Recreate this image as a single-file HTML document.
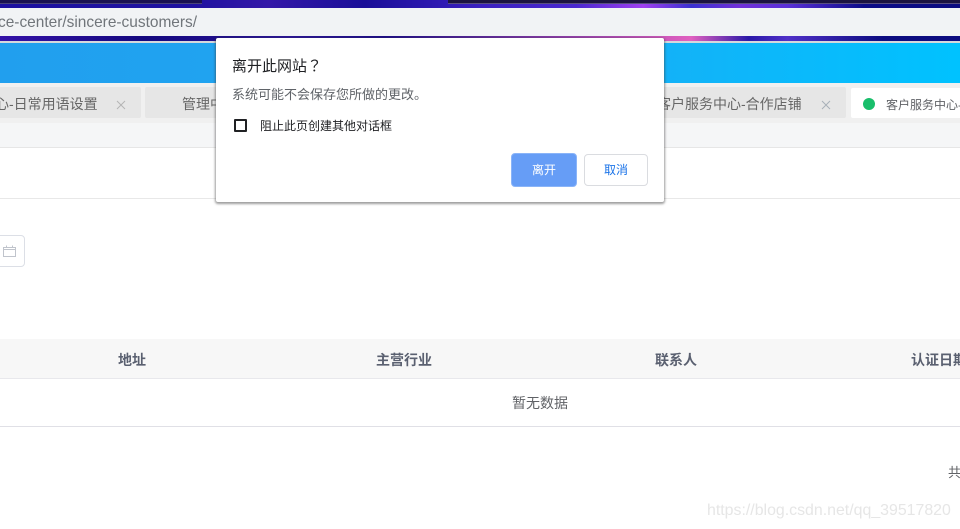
<!DOCTYPE html>
<html><head><meta charset="utf-8">
<style>
html,body{margin:0;padding:0;background:#fff}
body{width:960px;height:529px;overflow:hidden;position:relative;font-family:"Liberation Sans","Noto Sans CJK SC",sans-serif;color:#606266}
div,span{position:absolute;white-space:nowrap}
.t{line-height:20px}
</style></head><body>
<div style="left:0;top:0;width:960px;height:8px;background:linear-gradient(90deg,#1c10a0 0%,#1f12a0 20%,#3418a8 28%,#1a0e98 38%,#3a20c0 50%,#4a28d0 60%,#a040f0 67%,#3a30d0 72%,#7030d8 77%,#5a30d8 82%,#0c0c88 90%,#0c0c80 100%)"></div>
<div style="left:0;top:0;width:202px;height:3px;background:#1a1250"></div>
<div style="left:448px;top:0;width:512px;height:3px;background:#1c1440"></div>
<div style="left:0;top:3px;width:202px;height:1px;background:#4a4478"></div>
<div style="left:448px;top:3px;width:512px;height:1px;background:#5a5080"></div>
<div style="left:0;top:36px;width:960px;height:5px;background:linear-gradient(90deg,#3412a8 0%,#14087e 15%,#2a1498 30%,#1c0c88 40%,#e060c0 72%,#2a18a8 78%,#5030c8 82%,#0c0c80 92%,#0c0c80 100%)"></div>
<div style="left:0;top:8px;width:960px;height:28px;background:#f1f3f5"></div>
<div class="t" style="left:-2px;top:13px;font-size:15.45px;color:#70757a">ce-center/sincere-customers/</div>
<div style="left:0;top:43px;width:960px;height:40px;background:linear-gradient(90deg,#219fee 0%,#1fa8f3 50%,#00c2ff 100%)"></div>
<div style="left:0;top:41px;width:960px;height:2px;background:#d5d8dc"></div>
<div style="left:0;top:83px;width:960px;height:40px;background:#f0f0f0"></div>
<div style="left:0;top:87px;width:141px;height:31px;background:#e6e6e6;border-radius:0 2px 2px 0"></div>
<div class="t" style="left:-5px;top:94px;font-size:14px;color:#666">心-日常用语设置</div>
<svg style="position:absolute;left:116px;top:100px" width="10" height="10"><path d="M1 1L9 9M9 1L1 9" stroke="#b4b4b4" stroke-width="1" fill="none"/></svg>
<div style="left:145px;top:87px;width:80px;height:31px;background:#e6e6e6;border-radius:2px"></div>
<div class="t" style="left:182px;top:94px;font-size:14px;color:#666">管理中</div>
<div style="left:660px;top:87px;width:186px;height:31px;background:#e6e6e6;border-radius:2px"></div>
<div class="t" style="left:657px;top:94px;font-size:14px;color:#666">客户服务中心-合作店铺</div>
<svg style="position:absolute;left:821px;top:100px" width="10" height="10"><path d="M1 1L9 9M9 1L1 9" stroke="#a8b0b8" stroke-width="1" fill="none"/></svg>
<div style="left:851px;top:88px;width:109px;height:30px;background:#fff;border-radius:2px 0 0 2px"></div>
<div style="left:863px;top:98px;width:12px;height:12px;border-radius:50%;background:#19be6b"></div>
<div class="t" style="left:886px;top:95px;font-size:12px;color:#606266">客户服务中心-</div>
<div style="left:0;top:123px;width:960px;height:24px;background:#f5f6f7"></div>
<div style="left:0;top:147px;width:960px;height:1px;background:#e6e6e6"></div>
<div style="left:0;top:198px;width:960px;height:1px;background:#e8e8e8"></div>
<div style="left:-10px;top:235px;width:33px;height:30px;border:1px solid #dcdfe6;border-radius:4px;background:#fff"></div>
<svg style="position:absolute;left:3px;top:245px" width="14" height="13"><path d="M.5 2.5H12.5V11.5H.5ZM.5 4.5H12.5M3.5 .5V3M9.5 .5V3" stroke="#c0c4cc" fill="none"/></svg>
<div style="left:0;top:339px;width:960px;height:39px;background:#f7f7f7"></div>
<div style="left:0;top:378px;width:960px;height:1px;background:#e8e8ec"></div>
<div style="left:0;top:426px;width:960px;height:1px;background:#e0e0e6"></div>
<div class="t" style="left:118px;top:350px;font-size:14px;font-weight:bold;color:#5a6070">地址</div>
<div class="t" style="left:376px;top:350px;font-size:14px;font-weight:bold;color:#5a6070">主营行业</div>
<div class="t" style="left:655px;top:350px;font-size:14px;font-weight:bold;color:#5a6070">联系人</div>
<div class="t" style="left:911px;top:350px;font-size:14px;font-weight:bold;color:#5a6070">认证日期</div>
<div class="t" style="left:512px;top:393px;font-size:14px;color:#606266">暂无数据</div>
<div class="t" style="left:948px;top:463px;font-size:13px;color:#606266">共</div>
<div class="t" style="left:707px;top:501px;font-size:15.9px;color:#e6e6e6">https://blog.csdn.net/qq_39517820</div>
<div style="left:216px;top:38px;width:448px;height:164px;background:#fff;border-radius:2px;box-shadow:0 1px 2px 1px rgba(60,60,60,.5)"></div>
<div class="t" style="left:232px;top:56px;font-size:15px;color:#202124;font-family:'Noto Sans CJK TC','Noto Sans CJK SC',sans-serif">离开此网站？</div>
<div class="t" style="left:232px;top:85px;font-size:13px;color:#5f6368">系统可能不会保存您所做的更改。</div>
<div style="left:234px;top:119px;width:9px;height:9px;border:2px solid #202124;border-radius:1px"></div>
<div class="t" style="left:260px;top:116px;font-size:12px;color:#202124">阻止此页创建其他对话框</div>
<div style="left:511px;top:153px;width:66px;height:34px;background:#669df6;border:1px solid #8ab4f8;box-sizing:border-box;border-radius:4px;color:#fff;font-size:12px;text-align:center;line-height:33px">离开</div>
<div style="left:584px;top:154px;width:64px;height:32px;background:#fff;border:1px solid #dadce0;box-sizing:border-box;border-radius:4px;color:#1a73e8;font-size:12px;text-align:center;line-height:31px">取消</div>
</body></html>
